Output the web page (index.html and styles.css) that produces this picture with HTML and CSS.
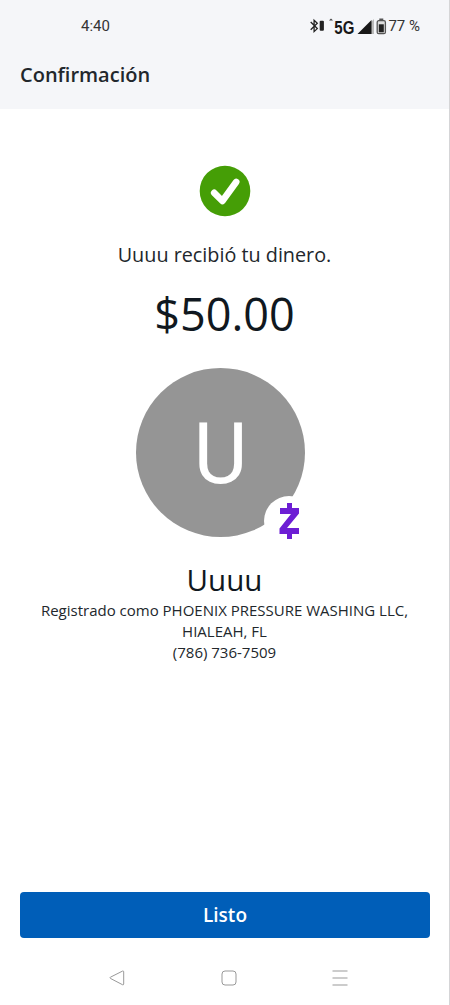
FILE: index.html
```html
<!DOCTYPE html>
<html lang="es">
  <head>
    <meta charset="UTF-8" />
    <meta name="viewport" content="width=device-width, initial-scale=1.0" />
    <title>Confirmación</title>
    <link rel="stylesheet" href="styles.css">
  </head>
  <body>
    <div class="screen">
      <header class="header">
        <div class="status">
          <span class="time">4:40</span>
          <div class="status-right">
            <svg class="status-icons" width="88" height="24" viewBox="0 0 88 24">
              <!-- bluetooth -->
              <path d="M1.7 8l6.6 6.6-3.2 3V6.2l3.2 3-6.6 6.6" fill="none" stroke="#222" stroke-width="1.3" />
              <rect x="10.7" y="6.8" width="4.2" height="10" rx="1" fill="#222" />
              <path d="M20 6.5l2-2 2 2z" fill="#444" />
              <text class="network" x="25.3" y="20" textLength="20" lengthAdjust="spacingAndGlyphs">5G</text>
              <!-- signal -->
              <path d="M65 5v15h-3V8z" fill="#bbb" />
              <path d="M48.5 20L62.5 6v14z" fill="#181818" />
              <!-- battery -->
              <path d="M70.3 5.5h4" stroke="#555" stroke-width="2" />
              <rect x="68.2" y="6.7" width="8.2" height="13" rx="1.5" fill="#ddd" stroke="#555" stroke-width="1.3" />
              <rect x="69.8" y="10.3" width="5" height="8" fill="#222" />
            </svg>
            <span class="percent">77 %</span>
          </div>
        </div>
        <h1 class="title">Confirmación</h1>
      </header>

      <main class="content">
        <svg class="check" width="52" height="52" viewBox="0 0 52 52">
          <circle cx="26" cy="26" r="25.3" fill="#459e06" />
          <path d="M15.2 27.8l8.2 8.2L37.2 17" fill="none" stroke="#fff" stroke-width="6.6" stroke-linecap="round" stroke-linejoin="round" />
        </svg>
        <p class="message">Uuuu recibió tu dinero.</p>
        <p class="amount">$50.00</p>

        <div class="avatar">
          <span class="initial">U</span>
          <span class="badge">
            <svg width="50" height="50" viewBox="0 0 50 50">
              <path d="M23 7h5v5h7v5.5L23 32h12v6h-7v5h-5v-5h-7.5v-5.5L27 18H16v-6h7z" fill="#6d1ed4" />
            </svg>
          </span>
        </div>

        <h2 class="name">Uuuu</h2>
        <p class="details">
          Registrado como PHOENIX PRESSURE WASHING LLC,<br />
          HIALEAH, FL<br />
          (786) 736-7509
        </p>
      </main>

      <footer class="footer">
        <button class="button" type="button">Listo</button>
        <nav class="nav">
          <svg width="16" height="16" viewBox="0 0 16 16">
            <path d="M13.7 1L1.4 7.2q-1 .6 0 1.2l12.3 6.4q1 .2 1-.8V1.8q0-1-1-.8z" />
          </svg>
          <svg width="16" height="16" viewBox="0 0 16 16">
            <rect x="1" y="1" width="14" height="14" rx="3" />
          </svg>
          <svg width="16" height="16" viewBox="0 0 16 16">
            <path d="M.5 1h15M.5 8h15M.5 15h15" />
          </svg>
        </nav>
      </footer>
    </div>
  </body>
</html>
```

FILE: styles.css
```css
* {
  box-sizing: border-box;
  margin: 0;
  padding: 0;
}
body {
  background-color: #fff;
  color: #22272c;
  font-family: "Open Sans", "Noto Sans", sans-serif;
}
.screen {
  display: flex;
  flex-direction: column;
  width: 450px;
  height: 1005px;
  border-right: 1px solid #d5d5d7;
}

/* header */
.header {
  height: 109px;
  padding-top: 14px;
  background-color: #f5f6f9;
}
.status {
  display: flex;
  justify-content: space-between;
  height: 24px;
  padding: 0 29px 0 81px;
  font: 15px/24px Roboto, sans-serif;
  color: #333;
}
.status-right {
  display: flex;
}
.status-icons {
  flex: none;
  margin-right: -9px;
}
.network {
  font: bold 18px "Liberation Sans", sans-serif;
  fill: #181818;
}
.title {
  margin: 23px 0 0 20px;
  font-size: 20px;
  font-weight: 600;
  line-height: 28px;
}

/* content */
.content {
  display: flex;
  flex: 1;
  flex-direction: column;
  align-items: center;
  padding-top: 56px;
  text-align: center;
}
.message {
  margin-top: 24px;
  font-size: 19.8px;
  line-height: 28px;
}
.amount {
  margin-top: 14px;
  font-size: 45px;
  line-height: 62px;
  color: #101820;
}
.avatar {
  position: relative;
  width: 169px;
  height: 169px;
  margin: 23px 8px 0 0;
  border-radius: 50%;
  background-color: #959595;
  color: #fff;
}
.initial {
  display: block;
  padding-top: 1px;
  font: 86px/169px Roboto, sans-serif;
  transform: scaleX(0.96);
}
.badge {
  position: absolute;
  right: -9px;
  bottom: -9px;
  width: 50px;
  height: 50px;
  border-radius: 50%;
  background-color: #fff;
}
.name {
  margin-top: 22px;
  font-size: 29.5px;
  font-weight: 400;
  line-height: 41px;
  color: #101820;
}
.details {
  font-size: 15px;
  line-height: 21px;
  white-space: nowrap;
}

/* footer */
.footer {
  padding: 0 19px 0 20px;
}
.button {
  display: block;
  width: 100%;
  height: 46px;
  border: 0;
  border-radius: 4px;
  background-color: #005eb8;
  color: #fff;
  font: 600 19px/46px "Open Sans", sans-serif;
}
.nav {
  display: flex;
  justify-content: space-between;
  padding: 32px 82px 19px 89px;
}
.nav svg {
  fill: none;
  stroke: #999;
  stroke-width: 1;
}
```
